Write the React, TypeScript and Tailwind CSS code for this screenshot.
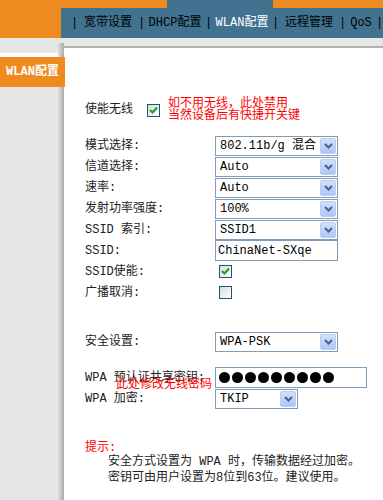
import type { ReactNode } from 'react'

const navItems = ['宽带设置', 'DHCP配置', 'WLAN配置', '远程管理', 'QoS']

function Chevron() {
  return (
    <svg width="9" height="6" viewBox="0 0 9 6">
      <path d="M1 1 L4.5 4.5 L8 1" fill="none" stroke="#4d6185" strokeWidth="2" />
    </svg>
  )
}

function Select({ value, width = 'w-[123px]' }: { value: string; width?: string }) {
  return (
    <div className={`${width} h-[20px] border border-[#7f9db9] bg-white flex items-center`}>
      <span className="flex-1 pl-[4px] leading-[16px] text-[12px] text-black whitespace-nowrap overflow-hidden">
        {value}
      </span>
      <span className="w-[16px] h-[16px] mr-[1px] rounded-[2px] border border-[#b9cdf9] bg-gradient-to-b from-[#d2e0fd] to-[#aec5f7] flex items-center justify-center">
        <Chevron />
      </span>
    </div>
  )
}

function Checkbox({ checked }: { checked?: boolean }) {
  return (
    <span className="w-[13px] h-[13px] border border-[#1c5180] bg-gradient-to-br from-[#dcdcd7] to-white flex items-center justify-center">
      {checked && (
        <svg width="11" height="11" viewBox="0 0 11 11">
          <path d="M2 5 L4.5 7.5 L9 2.5" fill="none" stroke="#21a121" strokeWidth="2.2" />
        </svg>
      )}
    </span>
  )
}

function Row({ label, children }: { label: string; children: ReactNode }) {
  return (
    <div className="flex items-center h-[21px]">
      <span className="w-[130px] text-[#222] leading-[14px] whitespace-nowrap">{label}</span>
      {children}
    </div>
  )
}

export default function App() {
  return (
    <div className="w-[383px] h-[500px] overflow-hidden bg-[#e6e6e6] text-[12px] font-['Liberation_Mono','Noto_Sans_CJK_SC',monospace]">
      {/* top header */}
      <div className="flex h-[38px]">
        <div className="w-[64px] bg-[#ee8a1f]" />
        <div className="flex-1 flex flex-col">
          <div className="flex h-[8px]">
            <div className="w-[106px] bg-[#ee8a1f]" />
            <div className="w-[106px] bg-[#41728f]" />
            <div className="flex-1 bg-[#ee8a1f]" />
          </div>
          <div className="h-[30px] bg-[#41728f] flex items-center pl-[10px] text-black">
            {navItems.map((item) => (
              <div key={item} className="flex items-center">
                <span className="w-[7px] text-center">|</span>
                <span
                  className={`${item === 'QoS' ? 'w-[30px]' : 'w-[60px]'} text-center whitespace-nowrap ${
                    item === 'WLAN配置' ? 'text-white' : ''
                  }`}
                >
                  {item}
                </span>
              </div>
            ))}
            <span className="w-[7px] text-center">|</span>
          </div>
        </div>
      </div>

      {/* body */}
      <div className="flex">
        <div className="w-[58px] flex flex-col pt-[15px]">
          <div className="h-[4px] bg-white" />
          <div className="w-[65px] h-[30px] bg-[#ee8a1f] relative z-10 flex items-center justify-center text-white font-bold whitespace-nowrap">
            WLAN配置
          </div>
        </div>
        <div className="w-[6px] h-[460px] mt-[5px] bg-gradient-to-r from-[#dedede] via-[#c6c6c6] to-[#a9a9a9]" />
        <div className="flex-1 h-[460px] mt-[8px] bg-white border-t-2 border-[#b3b3b3] pl-[21px] pt-[50px]">
          <div className="flex items-center h-[24px]">
            <span className="w-[62px] text-[#222]">使能无线</span>
            <Checkbox checked />
            <div className="ml-[8px] text-[#ff0000] leading-[12px] whitespace-nowrap">
              <div>如不用无线，此处禁用</div>
              <div>当然设备后有快捷开关键</div>
            </div>
          </div>

          <div className="mt-[13px]">
            <Row label="模式选择:">
              <Select value="802.11b/g 混合" />
            </Row>
            <Row label="信道选择:">
              <Select value="Auto" />
            </Row>
            <Row label="速率:">
              <Select value="Auto" />
            </Row>
            <Row label="发射功率强度:">
              <Select value="100%" />
            </Row>
            <Row label="SSID 索引:">
              <Select value="SSID1" />
            </Row>
            <Row label="SSID:">
              <div className="w-[123px] h-[21px] border border-[#7f9db9] bg-white flex items-center pl-[2px] text-black">
                ChinaNet-SXqe
              </div>
            </Row>
            <Row label="SSID使能:">
              <span className="ml-[4px]">
                <Checkbox checked />
              </span>
            </Row>
            <Row label="广播取消:">
              <span className="ml-[4px]">
                <Checkbox />
              </span>
            </Row>
          </div>

          <div className="mt-[28px]">
            <Row label="安全设置:">
              <Select value="WPA-PSK" />
            </Row>
          </div>

          <div className="mt-[15px]">
            <div className="flex items-center h-[21px] relative">
              <span className="w-[130px] text-[#222] leading-[14px] whitespace-nowrap">WPA 预认证共享密钥:</span>
              <div className="w-[152px] h-[21px] border border-[#7f9db9] bg-white flex items-center gap-[2px] pl-[3px]">
                {Array.from({ length: 9 }).map((_, i) => (
                  <span key={i} className="w-[11px] h-[11px] rounded-full bg-black" />
                ))}
              </div>
              <span className="absolute left-[31px] top-[12px] text-[#ff0000] leading-[12px] whitespace-nowrap">
                此处修改无线密码
              </span>
            </div>
            <Row label="WPA 加密:">
              <Select value="TKIP" width="w-[83px]" />
            </Row>
          </div>

          <div className="mt-[32px] text-[#ff0000] leading-[14px]">提示:</div>
          <div className="pl-[23px] -mt-[1px] leading-[16px] text-[#222] whitespace-nowrap">
            <div>安全方式设置为 WPA 时，传输数据经过加密。</div>
            <div>密钥可由用户设置为8位到63位。建议使用。</div>
          </div>
        </div>
      </div>
    </div>
  )
}
